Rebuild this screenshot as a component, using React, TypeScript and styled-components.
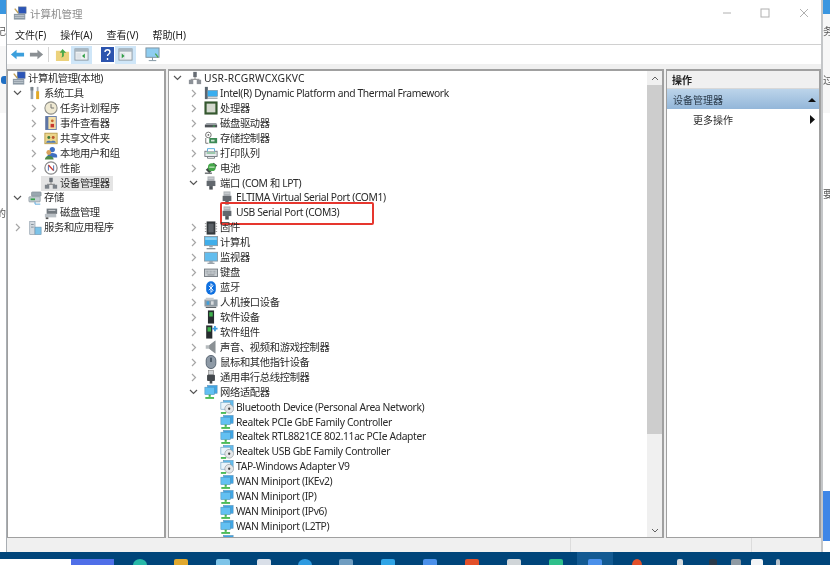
import React from "react";
import styled, { createGlobalStyle } from "styled-components";

const GlobalStyle = createGlobalStyle`
  *, *::before, *::after { box-sizing: border-box; }
  html, body { margin: 0; padding: 0; background: #fff; }
  body { font-family: "Noto Sans", "Noto Sans CJK SC", sans-serif; }
`;

type IconKind =
  | "mgmt" | "tools" | "clock" | "event" | "share" | "users" | "perf" | "devmgr" | "store" | "disk" | "service"
  | "host" | "intel" | "cpu" | "drive" | "storectl" | "printer" | "battery" | "port" | "firmware" | "computer"
  | "monitor" | "keyboard" | "bt" | "hid" | "softdev" | "softcomp" | "sound" | "mouse" | "usb" | "net" | "nic" | "nicoff";

const netShape = (
  <>
    <rect x="4" y="0.5" width="11" height="9" fill="#3ea6e6" stroke="#5c8fb5" strokeWidth=".6" />
    <rect x="1" y="2.5" width="11" height="8.500" fill="#62c0f2" stroke="#4c8fb8" strokeWidth=".6" />
    <path d="M6.500 11v2.500" stroke="#3fb54a" strokeWidth="2.400" />
    <path d="M1.500 14.800h10" stroke="#3fb54a" strokeWidth="2" />
  </>
);

const iconShapes: Record<IconKind, React.ReactNode> = {
  mgmt: (
    <>
      <rect x="1" y="9" width="13" height="6.500" fill="#8b98a3" />
      <path d="M2 11h11M2 13h11" stroke="#d6dde2" strokeWidth=".8" />
      <rect x="6" y="1" width="9" height="7.500" fill="#2b55b8" stroke="#6d7f92" strokeWidth=".6" />
      <path d="M2 3l4 5" stroke="#c2a35a" strokeWidth="1.600" />
    </>
  ),
  tools: (
    <>
      <path d="M4.500 1v14" stroke="#9aa3ab" strokeWidth="3" />
      <path d="M3 1h1v4H3zM5 1h1v4H5z" fill="#5f686f" />
      <path d="M11 1v6" stroke="#a8adb2" strokeWidth="2" />
      <path d="M11 6v9" stroke="#e2a824" strokeWidth="3.400" />
    </>
  ),
  clock: (
    <>
      <circle cx="8" cy="8" r="7" fill="#efe9d2" stroke="#8d8d86" strokeWidth="1.200" />
      <path d="M8 3.500V8h3.500" fill="none" stroke="#666" strokeWidth="1" />
    </>
  ),
  event: (
    <>
      <rect x="2" y="0.500" width="12" height="15" fill="#f3dfa8" stroke="#5d75a5" />
      <rect x="2" y="0.500" width="3" height="15" fill="#5d75a5" />
      <circle cx="9.500" cy="5.500" r="1.600" fill="#c9662c" />
      <rect x="7.500" y="9" width="4" height="4" fill="#c8382f" />
    </>
  ),
  share: (
    <>
      <rect x="1" y="2.500" width="14" height="12" fill="#ecd68b" stroke="#b79a4a" />
      <circle cx="5.500" cy="7.500" r="1.700" fill="#3d7a3d" />
      <circle cx="10.500" cy="7.500" r="1.700" fill="#b8552d" />
      <path d="M2.500 13.500c0-3 6-3 6 0zM7.500 13.500c0-3 6-3 6 0z" fill="#4d78b5" />
    </>
  ),
  users: (
    <>
      <circle cx="9.500" cy="4" r="3" fill="#3f6fc2" />
      <path d="M4 11c0-4 11-4 11 0v2H4z" fill="#3f6fc2" />
      <circle cx="5.500" cy="7.500" r="2.800" fill="#d9a25c" />
      <path d="M1 15.500c0-6 10-6 10 0z" fill="#4d8a4a" />
    </>
  ),
  perf: (
    <>
      <circle cx="8" cy="8" r="7" fill="#fff" stroke="#8a8a8a" strokeWidth="1.400" />
      <path d="M5 4.500L11 11" stroke="#cf3b30" strokeWidth="1.600" />
      <path d="M5 11V5M11 5v6" stroke="#3e62a8" strokeWidth="1" />
    </>
  ),
  devmgr: (
    <>
      <rect x="6" y="2" width="4" height="5" fill="#6b7178" />
      <path d="M8 7v2M3.500 9.500h9" stroke="#777" strokeWidth="1" />
      <rect x="1" y="10" width="5" height="4.500" fill="#7d838a" />
      <rect x="10" y="10" width="5" height="4.500" fill="#7d838a" />
    </>
  ),
  store: (
    <>
      <rect x="4" y="1" width="11" height="5" rx="1" fill="#9aa7b0" stroke="#77838c" strokeWidth=".6" />
      <rect x="1" y="6.500" width="13" height="6" rx="1" fill="#c3ccd2" stroke="#77838c" strokeWidth=".6" />
      <rect x="3" y="8.500" width="5" height="2" fill="#36a24a" />
      <path d="M8 12.500v2.500h6" stroke="#4a9fd8" strokeWidth="1" fill="none" />
    </>
  ),
  disk: (
    <>
      <rect x="3" y="3" width="12" height="6" fill="#737a80" />
      <path d="M1 9h13v4H1z" fill="#b9bfc4" />
      <path d="M5 5h8" stroke="#d8dce0" strokeWidth="1" />
      <rect x="2" y="13" width="3" height="2" fill="#555" />
    </>
  ),
  service: (
    <>
      <rect x="2" y="0.500" width="6" height="15" fill="#d4dae0" stroke="#8494a2" strokeWidth=".7" />
      <rect x="8" y="7" width="7" height="8.500" fill="#7cc3e8" stroke="#6e93ad" strokeWidth=".7" />
      <path d="M3.500 4h3M3.500 7h3" stroke="#7d8a95" strokeWidth="1" />
    </>
  ),
  host: (
    <>
      <rect x="6" y="1" width="4" height="6" fill="#666c73" />
      <path d="M8 7v2M3 9.500h10" stroke="#777" strokeWidth="1" />
      <rect x="1" y="10" width="5" height="5" fill="#8c9197" />
      <rect x="10" y="10" width="5" height="5" fill="#8c9197" />
    </>
  ),
  intel: (
    <>
      <rect x="1" y="1" width="3.400" height="14" fill="#5b6670" />
      <rect x="4" y="5" width="11.500" height="7" fill="#38aef0" stroke="#7b8b96" strokeWidth=".6" />
      <path d="M4 14h11.500" stroke="#a4acb3" strokeWidth="1.600" />
    </>
  ),
  cpu: (
    <>
      <rect x="0.500" y="0.500" width="15" height="15" fill="#35582f" />
      <rect x="3" y="3" width="10" height="10" fill="#d5d9cf" />
    </>
  ),
  drive: (
    <>
      <path d="M3 8h11l1 2H1z" fill="#9aa0a5" />
      <rect x="1" y="10" width="14" height="3" fill="#4d5257" />
      <rect x="10" y="11" width="2.400" height="1" fill="#3bc150" />
    </>
  ),
  storectl: (
    <>
      <circle cx="5" cy="4.500" r="3.200" fill="#fff" stroke="#666" />
      <circle cx="5" cy="4.500" r="1" fill="#666" />
      <path d="M2 8v6h3" stroke="#666" fill="none" />
      <rect x="6" y="8" width="9" height="6" fill="#3d8a55" />
      <rect x="8" y="10" width="4" height="2" fill="#cfe6d5" />
    </>
  ),
  printer: (
    <>
      <rect x="1" y="6" width="14" height="6" fill="#e7ebee" stroke="#70777d" />
      <path d="M4 6V3h8v3" fill="#fff" stroke="#4da5d9" />
      <path d="M4 12h8v2H4z" fill="#fff" stroke="#70777d" />
      <path d="M3 8h10" stroke="#3c9a58" strokeWidth="1" />
    </>
  ),
  battery: (
    <>
      <path d="M2 10l9-8 4 3-9 9z" fill="#3f4a45" />
      <circle cx="9" cy="7" r="4.500" fill="#44a648" />
      <path d="M6 7h6" stroke="#d8eed6" strokeWidth="1.200" />
      <path d="M1 14h8" stroke="#75797c" strokeWidth="1.800" />
    </>
  ),
  port: (
    <>
      <rect x="4" y="0.500" width="8" height="5" fill="#aeb3b7" />
      <rect x="3" y="5.500" width="10" height="6" fill="#62686e" />
      <rect x="6" y="11.500" width="4" height="4" fill="#4f5459" />
      <path d="M5 2.500h6" stroke="#e4e6e8" strokeWidth=".8" />
    </>
  ),
  firmware: (
    <>
      <rect x="3" y="0.500" width="10" height="15" fill="#33383c" />
      <path d="M1 3h2M1 6h2M1 9h2M1 12h2M13 3h2M13 6h2M13 9h2M13 12h2" stroke="#888" strokeWidth="1" />
      <rect x="5" y="3" width="6" height="10" fill="#5b6167" />
    </>
  ),
  computer: (
    <>
      <rect x="0.500" y="0.500" width="15" height="10.500" fill="#40aeea" stroke="#8b99a3" />
      <path d="M1.500 1.500h13v3h-13z" fill="#8ed4f5" />
      <path d="M6 11h4v2H6z" fill="#9aa4ac" />
      <path d="M3 14.500h10" stroke="#7e8991" strokeWidth="1.400" />
    </>
  ),
  monitor: (
    <>
      <rect x="0.500" y="1.500" width="15" height="10" fill="#62bdee" stroke="#8b99a3" />
      <path d="M6 11.500h4v2H6z" fill="#9aa4ac" />
      <path d="M4 14h8" stroke="#7e8991" strokeWidth="1.200" />
    </>
  ),
  keyboard: (
    <>
      <rect x="0.500" y="3.500" width="15" height="8.500" fill="#c9ced2" stroke="#6e757b" />
      <path d="M2 6h12M2 8h12" stroke="#8c9399" strokeWidth="1" strokeDasharray="1 .6" />
      <path d="M4 10.200h8" stroke="#7a8086" strokeWidth="1" />
    </>
  ),
  bt: (
    <>
      <rect x="2.500" y="0.300" width="11" height="15.400" rx="5.500" fill="#0d6fe0" />
      <path d="M5.500 5.500l5 5L8 13V3l2.500 2.500-5 5" fill="none" stroke="#fff" strokeWidth="1" />
    </>
  ),
  hid: (
    <>
      <rect x="0.500" y="4" width="15" height="8" fill="#8e9aa3" />
      <rect x="2" y="2" width="9" height="3" fill="#c6ccd1" />
      <rect x="3" y="6" width="3" height="4" fill="#3f9fdb" />
      <rect x="8" y="6" width="3" height="4" fill="#d9dde0" />
      <path d="M2 13h12" stroke="#5d6368" strokeWidth="1.400" />
    </>
  ),
  softdev: (
    <>
      <rect x="4.500" y="0.500" width="7" height="15" fill="#262b2e" />
      <rect x="6" y="2.500" width="4" height="5" fill="#3fb24d" />
    </>
  ),
  softcomp: (
    <>
      <rect x="2.500" y="0.500" width="7" height="15" fill="#262b2e" />
      <rect x="4" y="2.500" width="4" height="5" fill="#3fb24d" />
      <path d="M12.500 1v6M9.500 4h6" stroke="#3a9ade" strokeWidth="2" />
    </>
  ),
  sound: (
    <>
      <path d="M2 6h4l7-5.500v15L6 10H2z" fill="#b5babd" />
      <path d="M6 6l7-5.500v15L6 10z" fill="#8b9195" />
    </>
  ),
  mouse: (
    <>
      <rect x="2.500" y="0.500" width="11" height="15" rx="5.500" fill="#8e9aa6" stroke="#4f5d6a" />
      <rect x="7" y="3" width="2" height="5" fill="#465461" />
    </>
  ),
  usb: (
    <>
      <rect x="5" y="0.500" width="6" height="5" fill="#d2d5d8" stroke="#777" strokeWidth=".6" />
      <rect x="3.500" y="5.500" width="9" height="7" rx="1" fill="#43484d" />
      <rect x="6.500" y="12.500" width="3" height="3" fill="#43484d" />
    </>
  ),
  net: netShape,
  nic: netShape,
  nicoff: (
    <>
      <rect x="4" y="0.500" width="11" height="8" fill="#62bdee" stroke="#5c8fb5" strokeWidth=".6" />
      <rect x="1" y="2.500" width="11" height="8" fill="#eaf5fb" stroke="#4c8fb8" strokeWidth=".6" />
      <circle cx="10.500" cy="10" r="5" fill="#e4e7e9" stroke="#8d9499" strokeWidth=".7" />
      <circle cx="10.500" cy="10" r="1.300" fill="#444" />
      <path d="M1 14.800h6" stroke="#3fb54a" strokeWidth="2" />
    </>
  ),
};

const Desktop = styled.div`
  width: 830px;
  height: 565px;
  overflow: hidden;
  display: flex;
  flex-direction: column;
  filter: blur(0.5px);
  background: #fff;
`;

const Workspace = styled.div`
  flex: 0 0 552px;
  display: flex;
  min-height: 0;
`;

const Edge = styled.div<{ $w: number }>`
  flex: 0 0 ${(p) => p.$w}px;
  display: flex;
  flex-direction: column;
  overflow: hidden;
  background: #fff;
`;

const EdgeBlock = styled.div<{ $h: number; $bg: string; $end?: boolean }>`
  flex: 0 0 ${(p) => p.$h}px;
  background: ${(p) => p.$bg};
  display: flex;
  align-items: center;
  justify-content: ${(p) => (p.$end ? "flex-end" : "flex-start")};
  font-size: 10px;
  color: #555;
  white-space: nowrap;
`;

const EdgeTick = styled.div`
  width: 5px;
  height: 8px;
  background: #1f6fc4;
  border-radius: 3px 0 0 3px;
  flex: 0 0 5px;
`;

const Win = styled.div`
  flex: 1;
  min-width: 0;
  display: flex;
  flex-direction: column;
  background: #f0f0f0;
  border-left: 1px solid #a9aeb3;
  border-right: 2px solid #c4c6c8;
`;

const TitleBar = styled.div`
  flex: 0 0 26px;
  display: flex;
  align-items: center;
  background: #fff;
  padding-left: 6px;
  gap: 3px;
`;

const TitleText = styled.span`
  font-size: 10.5px;
  color: #8c8c8c;
`;

const WinControls = styled.div`
  margin-left: auto;
  display: flex;
  margin-right: -2px;
`;

const WinButton = styled.div`
  width: 38.5px;
  height: 26px;
  display: flex;
  align-items: center;
  justify-content: center;
  svg { display: block; }
`;

const MenuBar = styled.div`
  flex: 0 0 19px;
  display: flex;
  align-items: center;
  background: #fff;
  padding: 0 0 1px 8px;
  border-bottom: 1px solid #d0d0d0;
  gap: 14px;
`;

const MenuItem = styled.span`
  font-size: 10px;
  color: #222;
`;

const ToolBar = styled.div`
  flex: 0 0 19px;
  display: flex;
  align-items: center;
  background: #fff;
  padding-left: 1px;
`;

const ToolBtn = styled.div<{ $w: number; $on?: boolean }>`
  flex: 0 0 ${(p) => p.$w}px;
  height: 18px;
  display: flex;
  align-items: center;
  justify-content: center;
  background: ${(p) => (p.$on ? "#cfe6f8" : "transparent")};
`;

const ToolSep = styled.div`
  width: 1px;
  height: 15px;
  background: #d5d5d5;
  margin: 0 4px 0 2px;
`;

const ToolGap = styled.div`
  flex: 0 0 8px;
`;

const Panes = styled.div`
  flex: 1;
  min-height: 0;
  display: flex;
  padding-top: 5px;
  gap: 2px;
`;

const Pane = styled.div<{ $w?: number }>`
  position: relative;
  flex: ${(p) => (p.$w ? `0 0 ${p.$w}px` : "1")};
  min-width: 0;
  background: #fff;
  border: 1px solid #a0a0a0;
  border-top: 2px solid #a0a0a0;
  border-right-width: 2px;
  overflow: hidden;
  display: flex;
`;

const Tree = styled.div`
  flex: 1;
  min-width: 0;
  position: relative;
`;

const Row = styled.div<{ $indent: number }>`
  position: relative;
  height: 14.95px;
  display: flex;
  align-items: center;
  padding-left: ${(p) => p.$indent}px;
  white-space: nowrap;
`;

const Chevron = styled.span<{ $none?: boolean }>`
  flex: 0 0 11px;
  height: 10px;
  margin-right: 5px;
  display: ${(p) => (p.$none ? "none" : "flex")};
  align-items: center;
  justify-content: center;
`;

const Icon = styled.svg`
  flex: 0 0 14px;
  width: 14px;
  height: 14px;
  display: block;
`;

const Label = styled.span<{ $wide?: boolean }>`
  font-size: 10.3px;
  letter-spacing: ${(p) => (p.$wide ? "0.2px" : "-0.35px")};
  line-height: 15px;
  color: #2a2a2a;
  margin-left: 2px;
`;

const SelectedBg = styled.div`
  position: absolute;
  left: 33px;
  width: 72px;
  top: 0;
  bottom: 0;
  background: #e4e4e4;
`;

const RowBody = styled.div`
  position: relative;
  display: flex;
  align-items: center;
`;

const Mark = styled.div`
  position: absolute;
  left: 16px;
  top: -3.5px;
  width: 154px;
  height: 23px;
  border: 2px solid #e6362e;
  border-radius: 2px;
  pointer-events: none;
`;

const ScrollBar = styled.div`
  flex: 0 0 15px;
  display: flex;
  flex-direction: column;
  background: #f0f0f0;
`;

const ScrollArrow = styled.div`
  flex: 0 0 14px;
  display: flex;
  align-items: center;
  justify-content: center;
`;

const ScrollThumb = styled.div`
  flex: 0 0 349px;
  background: #cdcdcd;
`;

const ScrollRest = styled.div`
  flex: 1;
`;

const ActionCol = styled.div`
  flex: 1;
  display: flex;
  flex-direction: column;
`;

const ActionHead = styled.div`
  flex: 0 0 18px;
  display: flex;
  align-items: center;
  padding-left: 5px;
  font-size: 10px;
  font-weight: 700;
  color: #222;
  background: #f0f0f0;
  border-bottom: 1px solid #d8d8d8;
`;

const ActionGroup = styled.div`
  flex: 0 0 20px;
  display: flex;
  align-items: center;
  justify-content: space-between;
  padding: 0 3px 0 6px;
  font-size: 10px;
  color: #2a3a4a;
  background: linear-gradient(#bcd4ea, #93b6d9);
`;

const ActionItem = styled.div`
  flex: 0 0 21px;
  display: flex;
  align-items: center;
  justify-content: space-between;
  padding: 0 4.5px 0 26px;
  font-size: 10px;
  color: #2a2a2a;
`;

const StatusBar = styled.div`
  flex: 0 0 14px;
  display: flex;
  justify-content: flex-end;
  background: #f0f0f0;
`;

const StatusCell = styled.div<{ $w: number }>`
  flex: 0 0 ${(p) => p.$w}px;
  border-left: 1px solid #dcdcdc;
`;

const TaskBar = styled.div`
  flex: 1;
  display: flex;
  background: #00457a;
  padding-top: 7px;
  overflow: hidden;
`;

const SearchBox = styled.div`
  flex: 0 0 71px;
  height: 12px;
  background: #fff;
`;

const SearchBtn = styled.div`
  flex: 0 0 43px;
  height: 12px;
  margin-right: 6px;
  background: #4f6fe8;
`;

const TaskSlot = styled.div<{ $w: number; $on?: boolean }>`
  flex: 0 0 ${(p) => p.$w}px;
  display: flex;
  justify-content: center;
  margin-top: ${(p) => (p.$on ? "-7px" : "0")};
  padding-top: ${(p) => (p.$on ? "7px" : "0")};
  height: ${(p) => (p.$on ? "20px" : "12px")};
  background: ${(p) => (p.$on ? "#135a92" : "transparent")};
`;

const TaskIcon = styled.div<{ $c: string; $round?: boolean; $w?: number }>`
  width: ${(p) => p.$w ?? 14}px;
  height: 12px;
  background: ${(p) => p.$c};
  border-radius: ${(p) => (p.$round ? "50% 50% 0 0" : "2px 2px 0 0")};
`;

type Node = { label: string; icon: IconKind; level: number; open?: boolean; leaf?: boolean; selected?: boolean; mark?: boolean; wide?: boolean };

const leftTree: Node[] = [
  { label: "计算机管理(本地)", icon: "mgmt", level: 0, leaf: true },
  { label: "系统工具", icon: "tools", level: 0, open: true },
  { label: "任务计划程序", icon: "clock", level: 1 },
  { label: "事件查看器", icon: "event", level: 1 },
  { label: "共享文件夹", icon: "share", level: 1 },
  { label: "本地用户和组", icon: "users", level: 1 },
  { label: "性能", icon: "perf", level: 1 },
  { label: "设备管理器", icon: "devmgr", level: 1, leaf: true, selected: true },
  { label: "存储", icon: "store", level: 0, open: true },
  { label: "磁盘管理", icon: "disk", level: 1, leaf: true },
  { label: "服务和应用程序", icon: "service", level: 0 },
];

const centerTree: Node[] = [
  { label: "USR-RCGRWCXGKVC", icon: "host", level: 0, open: true, wide: true },
  { label: "Intel(R) Dynamic Platform and Thermal Framework", icon: "intel", level: 1 },
  { label: "处理器", icon: "cpu", level: 1 },
  { label: "磁盘驱动器", icon: "drive", level: 1 },
  { label: "存储控制器", icon: "storectl", level: 1 },
  { label: "打印队列", icon: "printer", level: 1 },
  { label: "电池", icon: "battery", level: 1 },
  { label: "端口 (COM 和 LPT)", icon: "port", level: 1, open: true },
  { label: "ELTIMA Virtual Serial Port (COM1)", icon: "port", level: 2, leaf: true },
  { label: "USB Serial Port (COM3)", icon: "port", level: 2, leaf: true, mark: true },
  { label: "固件", icon: "firmware", level: 1 },
  { label: "计算机", icon: "computer", level: 1 },
  { label: "监视器", icon: "monitor", level: 1 },
  { label: "键盘", icon: "keyboard", level: 1 },
  { label: "蓝牙", icon: "bt", level: 1 },
  { label: "人机接口设备", icon: "hid", level: 1 },
  { label: "软件设备", icon: "softdev", level: 1 },
  { label: "软件组件", icon: "softcomp", level: 1 },
  { label: "声音、视频和游戏控制器", icon: "sound", level: 1 },
  { label: "鼠标和其他指针设备", icon: "mouse", level: 1 },
  { label: "通用串行总线控制器", icon: "usb", level: 1 },
  { label: "网络适配器", icon: "net", level: 1, open: true },
  { label: "Bluetooth Device (Personal Area Network)", icon: "nicoff", level: 2, leaf: true },
  { label: "Realtek PCIe GbE Family Controller", icon: "nic", level: 2, leaf: true },
  { label: "Realtek RTL8821CE 802.11ac PCIe Adapter", icon: "nic", level: 2, leaf: true },
  { label: "Realtek USB GbE Family Controller", icon: "nicoff", level: 2, leaf: true },
  { label: "TAP-Windows Adapter V9", icon: "nicoff", level: 2, leaf: true },
  { label: "WAN Miniport (IKEv2)", icon: "nic", level: 2, leaf: true },
  { label: "WAN Miniport (IP)", icon: "nic", level: 2, leaf: true },
  { label: "WAN Miniport (IPv6)", icon: "nic", level: 2, leaf: true },
  { label: "WAN Miniport (L2TP)", icon: "nic", level: 2, leaf: true },
  { label: "WAN Miniport (Network Monitor)", icon: "nic", level: 2, leaf: true },
];

function Expander({ node, hidden }: { node: Node; hidden: boolean }) {
  return (
    <Chevron $none={hidden}>
      {!node.leaf &&
        (node.open ? (
          <svg width="9" height="6" viewBox="0 0 9 6">
            <path d="M1 1l3.5 3.5L8 1" fill="none" stroke="#555" strokeWidth="1.2" />
          </svg>
        ) : (
          <svg width="6" height="9" viewBox="0 0 6 9">
            <path d="M1 1l3.5 3.5L1 8" fill="none" stroke="#a6a6a6" strokeWidth="1.2" />
          </svg>
        ))}
    </Chevron>
  );
}

function TreeIcon({ kind }: { kind: IconKind }) {
  return <Icon viewBox="0 0 16 16">{iconShapes[kind]}</Icon>;
}

function TreeRows({ nodes, base, rootless }: { nodes: Node[]; base: number; rootless?: boolean }) {
  return (
    <>
      {nodes.map((n, i) => (
        <Row key={n.label} $indent={base + n.level * 16}>
          {n.selected && <SelectedBg />}
          <RowBody>
            <Expander node={n} hidden={!!rootless && i === 0} />
            <TreeIcon kind={n.icon} />
            <Label $wide={n.wide}>{n.label}</Label>
            {n.mark && <Mark />}
          </RowBody>
        </Row>
      ))}
    </>
  );
}

function ToolGlyph({ children }: { children: React.ReactNode }) {
  return (
    <svg width="15" height="15" viewBox="0 0 16 16">
      {children}
    </svg>
  );
}

const paneGlyph = (side: "l" | "r") => (
  <>
    <rect x="1" y="2" width="14" height="12" fill="#eef1f3" stroke="#8d99a3" />
    <rect x="1" y="2" width="14" height="3" fill="#a9b6c0" />
    <rect x="2.5" y="6.5" width="5" height="6" fill="#dfe4e8" />
    {side === "l" ? (
      <path d="M11.5 7v5l-3-2.5z" fill="#2f9e44" />
    ) : (
      <path d="M4 7v5l3-2.5z" fill="#2f9e44" />
    )}
  </>
);

export default function App() {
  return (
    <Desktop>
      <GlobalStyle />
      <Workspace>
        <Edge $w={6}>
          <EdgeBlock $h={14} $bg="#3a96e0" />
          <EdgeBlock $h={32} $bg="#fff" $end>
            记
          </EdgeBlock>
          <EdgeBlock $h={67} $bg="#f7f7f7" $end>
            <EdgeTick />
          </EdgeBlock>
          <EdgeBlock $h={92} $bg="#fff" />
          <EdgeBlock $h={14} $bg="#fff" $end>
            的
          </EdgeBlock>
        </Edge>
        <Win>
          <TitleBar>
            <TreeIcon kind="mgmt" />
            <TitleText>计算机管理</TitleText>
            <WinControls>
              <WinButton>
                <svg width="10" height="10" viewBox="0 0 10 10">
                  <path d="M1 5h8" stroke="#b0b0b0" />
                </svg>
              </WinButton>
              <WinButton>
                <svg width="10" height="10" viewBox="0 0 10 10">
                  <rect x="1" y="1" width="8" height="8" fill="none" stroke="#b0b0b0" />
                </svg>
              </WinButton>
              <WinButton>
                <svg width="10" height="10" viewBox="0 0 10 10">
                  <path d="M1 1l8 8M9 1l-8 8" stroke="#b0b0b0" />
                </svg>
              </WinButton>
            </WinControls>
          </TitleBar>
          <MenuBar>
            <MenuItem>文件(F)</MenuItem>
            <MenuItem>操作(A)</MenuItem>
            <MenuItem>查看(V)</MenuItem>
            <MenuItem>帮助(H)</MenuItem>
          </MenuBar>
          <ToolBar>
            <ToolBtn $w={19}>
              <ToolGlyph>
                <path d="M1 8l6-5v3h8v4H7v3z" fill="#3b9fdc" />
              </ToolGlyph>
            </ToolBtn>
            <ToolBtn $w={19}>
              <ToolGlyph>
                <path d="M15 8l-6-5v3H1v4h8v3z" fill="#8a8f93" />
              </ToolGlyph>
            </ToolBtn>
            <ToolSep />
            <ToolBtn $w={18}>
              <ToolGlyph>
                <path d="M1 4h5l1 1h8v10H1z" fill="#ecd27c" />
                <path d="M8 2l4 4H9.5v3c0 1-1 2-3 2 1-1 1-1 1-2V6H5z" fill="#4aa84a" />
              </ToolGlyph>
            </ToolBtn>
            <ToolBtn $w={21} $on>
              <ToolGlyph>{paneGlyph("l")}</ToolGlyph>
            </ToolBtn>
            <ToolGap />
            <ToolBtn $w={15}>
              <svg width="13" height="15" viewBox="0 0 13 15">
                <rect width="13" height="15" fill="#2c54ae" />
                <path d="M4 5c0-3 5-3 5 0 0 2-2.5 2-2.5 4" fill="none" stroke="#fff" strokeWidth="1.4" />
                <path d="M6.5 11v2" stroke="#fff" strokeWidth="1.4" />
              </svg>
            </ToolBtn>
            <ToolBtn $w={21} $on>
              <ToolGlyph>{paneGlyph("r")}</ToolGlyph>
            </ToolBtn>
            <ToolBtn $w={32}>
              <ToolGlyph>
                <rect x="1" y="1" width="14" height="10" fill="#8fcdf0" stroke="#7f929f" />
                <path d="M8 11v3M4 14.5h8" stroke="#7f929f" />
                <path d="M11 7l3 4" stroke="#4aa84a" strokeWidth="1.4" />
              </ToolGlyph>
            </ToolBtn>
          </ToolBar>
          <Panes>
            <Pane $w={159}>
              <Tree>
                <TreeRows nodes={leftTree} base={4} rootless />
              </Tree>
            </Pane>
            <Pane $w={496}>
              <Tree>
                <TreeRows nodes={centerTree} base={3} />
              </Tree>
              <ScrollBar>
                <ScrollArrow>
                  <svg width="8" height="5" viewBox="0 0 8 5">
                    <path d="M1 4l3-3 3 3" fill="none" stroke="#606060" />
                  </svg>
                </ScrollArrow>
                <ScrollThumb />
                <ScrollRest />
                <ScrollArrow>
                  <svg width="8" height="5" viewBox="0 0 8 5">
                    <path d="M1 1l3 3 3-3" fill="none" stroke="#606060" />
                  </svg>
                </ScrollArrow>
              </ScrollBar>
            </Pane>
            <Pane>
              <ActionCol>
                <ActionHead>操作</ActionHead>
                <ActionGroup>
                  设备管理器
                  <svg width="8" height="5" viewBox="0 0 8 5">
                    <path d="M0 5l4-4 4 4z" fill="#111" />
                  </svg>
                </ActionGroup>
                <ActionItem>
                  更多操作
                  <svg width="5" height="9" viewBox="0 0 5 9">
                    <path d="M0 0l5 4.5L0 9z" fill="#111" />
                  </svg>
                </ActionItem>
              </ActionCol>
            </Pane>
          </Panes>
          <StatusBar>
            <StatusCell $w={181} />
            <StatusCell $w={70} />
          </StatusBar>
        </Win>
        <Edge $w={7}>
          <EdgeBlock $h={14} $bg="#3a96e0" />
          <EdgeBlock $h={32} $bg="#f7f7f7">
            务
          </EdgeBlock>
          <EdgeBlock $h={67} $bg="#f7f7f7">
            过
          </EdgeBlock>
          <EdgeBlock $h={73} $bg="#fff" />
          <EdgeBlock $h={14} $bg="#fff">
            要
          </EdgeBlock>
          <EdgeBlock $h={290} $bg="#fff" />
          <EdgeBlock $h={50} $bg="#3f86e6" />
          <EdgeBlock $h={12} $bg="#fff" />
        </Edge>
      </Workspace>
      <TaskBar>
        <SearchBox />
        <SearchBtn />
        <TaskSlot $w={40}>
          <TaskIcon $c="#27b8a8" $round />
        </TaskSlot>
        <TaskSlot $w={41.5}>
          <TaskIcon $c="#e0a82e" />
        </TaskSlot>
        <TaskSlot $w={42.5}>
          <TaskIcon $c="#7ec4e8" />
        </TaskSlot>
        <TaskSlot $w={40.5}>
          <TaskIcon $c="#d9dfe8" />
        </TaskSlot>
        <TaskSlot $w={40}>
          <TaskIcon $c="#2e9ae0" $round />
        </TaskSlot>
        <TaskSlot $w={42.5}>
          <TaskIcon $c="#6f9cc0" />
        </TaskSlot>
        <TaskSlot $w={42.5}>
          <TaskIcon $c="#2fa4e6" />
        </TaskSlot>
        <TaskSlot $w={41.5}>
          <TaskIcon $c="#4a90ea" />
        </TaskSlot>
        <TaskSlot $w={42.5}>
          <TaskIcon $c="#e2502a" />
        </TaskSlot>
        <TaskSlot $w={41.5}>
          <TaskIcon $c="#d0d5d8" />
        </TaskSlot>
        <TaskSlot $w={42}>
          <TaskIcon $c="#2ebf8a" />
        </TaskSlot>
        <TaskSlot $w={36} $on>
          <TaskIcon $c="#4a90ea" />
        </TaskSlot>
        <TaskSlot $w={48}>
          <TaskIcon $c="#e2502a" $round $w={10} />
        </TaskSlot>
        <TaskSlot $w={38}>
          <TaskIcon $c="#d5d9dc" $w={6} />
        </TaskSlot>
        <TaskSlot $w={28}>
          <TaskIcon $c="#2a3a4a" $w={8} />
        </TaskSlot>
        <TaskSlot $w={18}>
          <TaskIcon $c="#8f9aa3" $w={10} />
        </TaskSlot>
        <TaskSlot $w={24}>
          <TaskIcon $c="#f2f4f6" $w={12} />
        </TaskSlot>
        <TaskSlot $w={18}>
          <TaskIcon $c="#b8c2ca" $w={4} />
        </TaskSlot>
      </TaskBar>
    </Desktop>
  );
}
